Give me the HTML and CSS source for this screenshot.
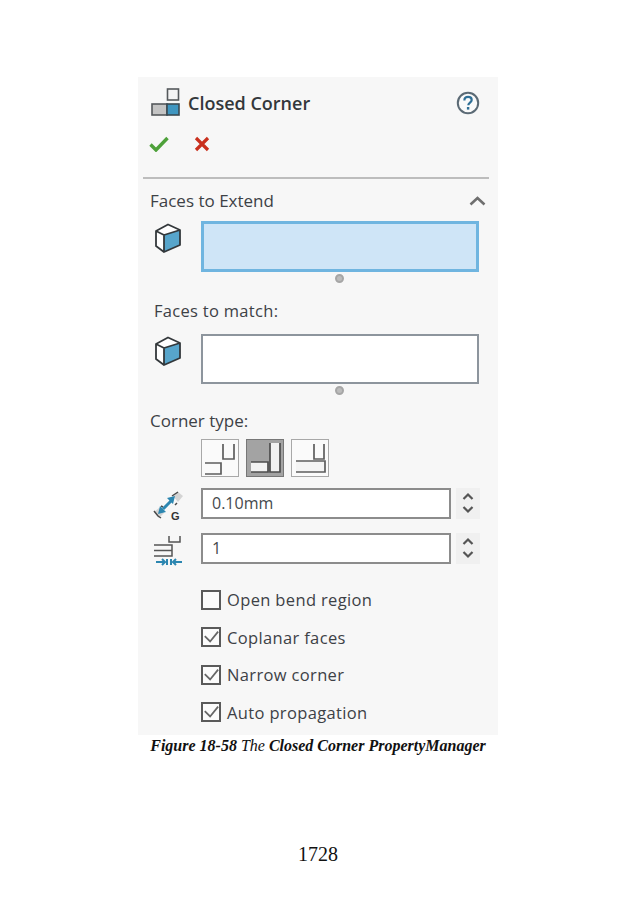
FILE: index.html
```html
<!DOCTYPE html>
<html>
<head>
  <title>Closed Corner PropertyManager</title>
  <link rel="stylesheet" href="styles.css">
</head>
<body>
  <div class="page">
    <div class="panel">
      <div class="panel-header">
        <svg class="title-icon" width="29" height="29" viewBox="0 0 29 29">
          <rect x="16.5" y="1" width="11" height="11" fill="#f4f4f4" stroke="#55595c" stroke-width="1.6"/>
          <rect x="1" y="16" width="15" height="11" fill="#c4c4c4" stroke="#55595c" stroke-width="1.6"/>
          <rect x="16" y="16" width="12" height="11" fill="#3f96c0" stroke="#3a4a52" stroke-width="1.6"/>
        </svg>
        <span class="panel-title">Closed Corner</span>
        <svg class="help-icon" width="24" height="24" viewBox="0 0 24 24">
          <circle cx="12" cy="12" r="10.2" fill="#fafafa" stroke="#5b6a75" stroke-width="2"/>
          <path d="M8.4 9.4c0-2.3 1.6-3.5 3.7-3.5s3.6 1.2 3.6 3.1c0 2.6-3.4 2.6-3.4 5.2" fill="none" stroke="#2f6f96" stroke-width="2.2"/>
          <rect x="10.9" y="16" width="2.4" height="2.6" fill="#2f6f96"/>
        </svg>
      </div>

      <div class="actions">
        <svg width="20" height="16" viewBox="0 0 20 16">
          <path d="M1.5 8.5l5.5 5.5 11.5-12" fill="none" stroke="#4ea13a" stroke-width="3.4"/>
        </svg>
        <svg width="16" height="16" viewBox="0 0 16 16">
          <path d="M2 2l12 12M14 2l-12 12" fill="none" stroke="#c9301e" stroke-width="3.2"/>
        </svg>
      </div>

      <div class="divider"></div>

      <div class="section-head">
        <span class="label heading">Faces to Extend</span>
        <svg width="17" height="10" viewBox="0 0 17 10">
          <path d="M1.5 8.5l7-6.500 7 6.500" fill="none" stroke="#6f6f6f" stroke-width="2.6"/>
        </svg>
      </div>

      <div class="select-row">
        <svg class="cube" width="28" height="30" viewBox="0 0 28 30">
          <path d="M2 8L14 1.500 26 7v15L10 29l-8-6z" fill="#fff"/>
          <path d="M10 12L26 7v15L10 29z" fill="#57a5cb"/>
          <path d="M2 8L14 1.500 26 7v15L10 29l-8-6zM2 8l8 4 16-5M10 12v17" fill="none" stroke="#33383b" stroke-width="1.800" stroke-linejoin="round"/>
        </svg>
        <div class="select-box active"></div>
      </div>
      <div class="grip"></div>

      <div class="label match-label">Faces to match:</div>

      <div class="select-row">
        <svg class="cube" width="28" height="30" viewBox="0 0 28 30">
          <path d="M2 8L14 1.500 26 7v15L10 29l-8-6z" fill="#fff"/>
          <path d="M10 12L26 7v15L10 29z" fill="#57a5cb"/>
          <path d="M2 8L14 1.500 26 7v15L10 29l-8-6zM2 8l8 4 16-5M10 12v17" fill="none" stroke="#33383b" stroke-width="1.800" stroke-linejoin="round"/>
        </svg>
        <div class="select-box"></div>
      </div>
      <div class="grip"></div>

      <div class="label corner-label">Corner type:</div>

      <div class="corner-buttons">
        <div class="corner-btn">
          <svg width="36" height="36" viewBox="0 0 36 36">
            <path d="M21 4v15h11V4" fill="#fafafa" stroke="#5d5d5d" stroke-width="1.700"/>
            <path d="M3 23h16v11H3" fill="#fafafa" stroke="#5d5d5d" stroke-width="1.700"/>
          </svg>
        </div>
        <div class="corner-btn selected">
          <svg width="36" height="36" viewBox="0 0 36 36">
            <path d="M23 3v29h10V3" fill="#f2f2f2" stroke="#4d4d4d" stroke-width="1.700"/>
            <path d="M4 22h17v10H4" fill="#f2f2f2" stroke="#4d4d4d" stroke-width="1.700"/>
          </svg>
        </div>
        <div class="corner-btn">
          <svg width="36" height="36" viewBox="0 0 36 36">
            <path d="M22 4v15h10V4" fill="#fafafa" stroke="#5d5d5d" stroke-width="1.700"/>
            <path d="M4 21h29v11H4" fill="#f4f4f4" stroke="#5d5d5d" stroke-width="1.700"/>
          </svg>
        </div>
      </div>

      <div class="field-row first">
        <svg class="field-icon" width="31" height="32" viewBox="0 0 31 32">
          <path d="M20 6l5-4 5 4-5 6z" fill="#d4d4d4"/>
          <path d="M1 22l5-4 5 5-5 5z" fill="#d4d4d4"/>
          <path d="M19 6l6-4M24 13l-2 2M1 21l4 5 3 2M10 17l-2-1" fill="none" stroke="#4a4a4a" stroke-width="1.500"/>
          <path d="M10 19L18 11" stroke="#2c86b0" stroke-width="3"/>
          <path d="M5 24l2-8 6 6zM22 6l-2 8-6-6z" fill="#2c86b0"/>
          <text class="g-mark" x="18" y="30">G</text>
        </svg>
        <div class="num-input">0.10mm</div>
        <div class="spinner">
          <svg width="12" height="24" viewBox="0 0 12 24">
            <path d="M1.500 8l4.500-4.500 4.500 4.500M1.500 16l4.500 4.500 4.500-4.500" fill="none" stroke="#555" stroke-width="2.200"/>
          </svg>
        </div>
      </div>

      <div class="field-row second">
        <svg class="field-icon" width="30" height="32" viewBox="0 0 30 32">
          <path d="M15 1v6h11V1" fill="none" stroke="#555" stroke-width="1.500"/>
          <path d="M0 10h18v11H0M0 15.500h18" fill="none" stroke="#555" stroke-width="1.500"/>
          <path d="M2 27h9M8 24l3 3-3 3M13 24v6M28 27h-9M22 24l-3 3 3 3M17 24v6" fill="none" stroke="#2c86b0" stroke-width="2"/>
        </svg>
        <div class="num-input">1</div>
        <div class="spinner">
          <svg width="12" height="24" viewBox="0 0 12 24">
            <path d="M1.500 8l4.500-4.500 4.500 4.500M1.500 16l4.500 4.500 4.500-4.500" fill="none" stroke="#555" stroke-width="2.200"/>
          </svg>
        </div>
      </div>

      <div class="checks">
        <div class="check-row"><span class="check-box"></span>Open bend region</div>
        <div class="check-row"><span class="check-box"><svg width="18" height="18" viewBox="0 0 18 18"><path d="M2 8l6 6 9-11" fill="none" stroke="#666" stroke-width="2"/></svg></span>Coplanar faces</div>
        <div class="check-row"><span class="check-box"><svg width="18" height="18" viewBox="0 0 18 18"><path d="M2 8l6 6 9-11" fill="none" stroke="#666" stroke-width="2"/></svg></span>Narrow corner</div>
        <div class="check-row"><span class="check-box"><svg width="18" height="18" viewBox="0 0 18 18"><path d="M2 8l6 6 9-11" fill="none" stroke="#666" stroke-width="2"/></svg></span>Auto propagation</div>
      </div>
    </div>

    <p class="caption"><b><i>Figure 18-58</i></b> <i>The</i> <b><i>Closed Corner PropertyManager</i></b></p>
    <p class="page-number">1728</p>
  </div>
</body>
</html>
```

FILE: styles.css
```css
body {
  margin: 0;
  background-color: #ffffff;
  font-family: "Open Sans", "Noto Sans", sans-serif;
  color: #3a3f44;
}

.page {
  width: 636px;
  height: 900px;
  padding-top: 77px;
  box-sizing: border-box;
  overflow: hidden;
}

.panel {
  width: 360px;
  height: 658px;
  margin-left: 138px;
  background-color: #f7f7f7;
}

.panel-header {
  display: flex;
  align-items: center;
  height: 29px;
  padding: 11px 18px 0 13px;
}
.panel-title {
  margin-left: 8px;
  font-size: 18px;
  font-weight: 600;
  color: #33373b;
  flex-grow: 1;
}

.actions {
  display: flex;
  align-items: center;
  gap: 25px;
  height: 16px;
  padding: 19px 0 0 11px;
}

.divider {
  height: 2px;
  margin: 25px 9px 0 5px;
  background-color: #bdbdbd;
}

.label {
  font-size: 16.5px;
  line-height: 22px;
  color: #3d4146;
}
.label.heading {
  font-size: 17px;
  font-weight: 500;
}

.section-head {
  display: flex;
  justify-content: space-between;
  align-items: center;
  padding: 11px 12px 0 12px;
}

.select-row {
  display: flex;
  align-items: flex-start;
  padding: 9px 19px 0 17px;
}
.cube {
  margin-top: 2px;
  margin-right: 19px;
  margin-left: -1px;
}
.select-box {
  flex-grow: 1;
  height: 50px;
  box-sizing: border-box;
  background-color: #ffffff;
  border: 2px solid #8d959d;
}
.select-box.active {
  background-color: #cfe5f7;
  border: 3px solid #70b5e0;
  height: 51px;
}

.grip {
  width: 9px;
  height: 9px;
  margin: 2px 0 0 197px;
  box-sizing: border-box;
  background-color: #bcbcbc;
  border: 2px solid #a6a6a6;
  border-radius: 50%;
}

.match-label {
  margin-top: 17px;
  margin-bottom: 3px;
  padding-left: 16px;
  letter-spacing: 0.3px;
}

.corner-label {
  margin-top: 15px;
  padding-left: 12px;
  font-size: 17px;
}

.corner-buttons {
  display: flex;
  gap: 7px;
  padding: 7px 0 0 63px;
}
.corner-btn {
  width: 38px;
  height: 38px;
  box-sizing: border-box;
  border: 1px solid #a8a8a8;
  background-color: #fafafa;
}
.corner-btn.selected {
  background-color: #a3a3a3;
  border-color: #777777;
}

.field-row {
  display: flex;
  align-items: center;
  padding-left: 15px;
}
.field-row.first {
  margin-top: 10px;
}
.field-row.second {
  margin-top: 13px;
}
.field-icon {
  margin: 3px 17px -3px 0; /* icons sit a little below their input */
  flex-shrink: 0;
}
.field-row.second .field-icon {
  margin-left: 1px;
}
.g-mark {
  font-family: "Liberation Sans", sans-serif;
  font-size: 11px;
  font-weight: bold;
  fill: #333333;
}
.num-input {
  width: 250px;
  height: 31px;
  box-sizing: border-box;
  padding-left: 9px;
  background-color: #ffffff;
  border: 2px solid #8c8c8c;
  font-size: 16px;
  line-height: 27px;
  color: #45494d;
}
.spinner {
  width: 24px;
  height: 31px;
  margin-left: 5px;
  display: flex;
  align-items: center;
  justify-content: center;
  background-color: #f0f0f0;
}

.checks {
  margin-top: 17px;
  padding-left: 63px;
}
.check-row {
  display: flex;
  align-items: center;
  height: 37.500px;
  font-size: 16.5px;
  letter-spacing: 0.35px;
  color: #3d4146;
}
.check-box {
  width: 20px;
  height: 20px;
  margin-right: 6px;
  box-sizing: border-box;
  border: 2px solid #5a5a5a;
  background-color: #fbfbfb;
  display: flex;
  align-items: center;
  justify-content: center;
}

.caption {
  margin: 2px 0 0 0;
  text-align: center;
  font-family: "Liberation Serif", serif;
  font-size: 16px;
  line-height: 18px;
  color: #111111;
}

.page-number {
  margin: 87px 0 0 0;
  text-align: center;
  font-family: "Liberation Serif", serif;
  font-size: 20px;
  line-height: 24px;
  color: #111111;
}
```
